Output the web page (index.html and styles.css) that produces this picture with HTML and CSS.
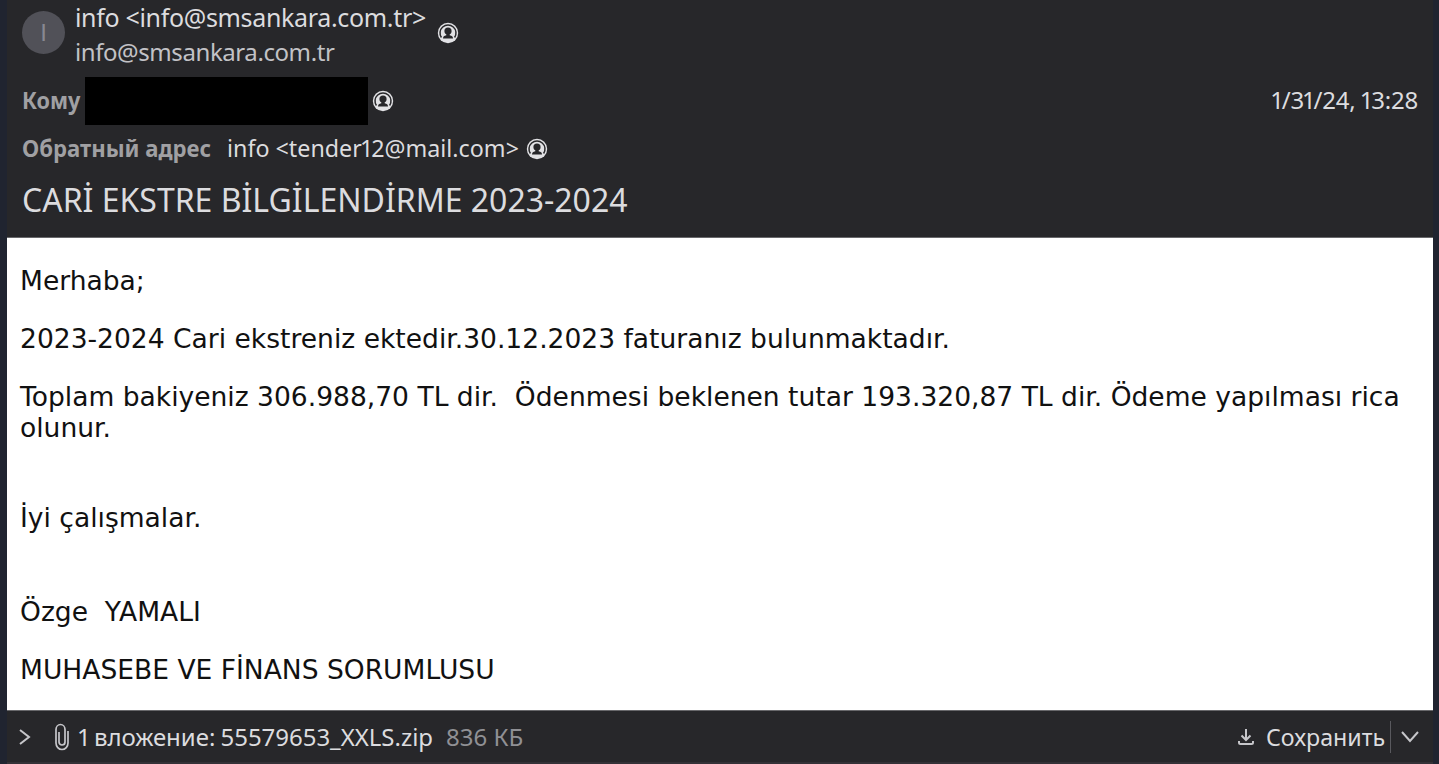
FILE: index.html
```html
<!DOCTYPE html>
<html lang="ru">
<head>
<meta charset="utf-8">
<title>CARİ EKSTRE BİLGİLENDİRME 2023-2024</title>
<link rel="stylesheet" href="styles.css">
</head>
<body>
<svg class="defs" width="0" height="0"><symbol id="contact" viewBox="0 0 22 22"><circle cx="11" cy="11" r="10.200" fill="currentColor"/><path d="M4.400 15.500A8 8 0 1 1 17.600 15.500" fill="none" stroke="#27272a" stroke-width="1.500"/><circle cx="11" cy="9" r="3.600" fill="#27272a"/><path d="M9.300 11h3.400v2.200q3.300.5 3.300 3.300H6q0-2.800 3.300-3.300z" fill="#27272a"/></symbol></svg>
<div class="window">
<header class="header">
<div class="sender"><div class="avatar">I</div><div class="names"><div><span class="t name">info &lt;info@smsankara.com.tr&gt;</span></div><div><span class="t mail">info@smsankara.com.tr</span></div></div><svg class="contact"><use href="#contact"/></svg></div>
<div class="row to"><span class="label t tol">Кому</span><span class="redacted"></span><svg class="contact"><use href="#contact"/></svg><time class="t"><i>1</i>/3<i>1</i>/24, <i>1</i>3:28</time></div>
<div class="row reply"><span class="label t rl">Обратный адрес</span><span class="t ra">info &lt;tender<i>1</i>2@mail.com&gt;</span><svg class="contact"><use href="#contact"/></svg></div>
<h1><span class="t subj">CARİ EKSTRE BİLGİLENDİRME 2023-2024</span></h1>
</header>
<main class="body">
<p>Merhaba;</p>
<p>2023-2024 Cari ekstreniz ektedir.30.12.2023 faturanız bulunmaktadır.</p>
<p>Toplam bakiyeniz 306.988,70 TL dir.&nbsp; Ödenmesi beklenen tutar 193.320,87 TL dir. Ödeme yapılması rica<br>olunur.</p>
<p class="gap1">İyi çalışmalar.</p>
<p class="gap2">Özge&nbsp; YAMALI</p>
<p>MUHASEBE VE FİNANS SORUMLUSU</p>
</main>
<footer class="footer">
<svg class="chev" viewBox="0 0 12 16"><path d="M1 1l9 7-9 7"/></svg>
<svg class="clip" viewBox="0 0 16 28"><path d="M11 7v12a3 3 0 0 1-6 0V9M14 8v12a6 6.500 0 0 1-12 0V6.500a4.500 5 0 0 1 9 0V8"/></svg>
<span class="t att"><i>1</i> вложение: 55579653_XXLS.zip</span><span class="t size">836 КБ</span>
<svg class="down" viewBox="0 0 16 18"><path d="M8 1v11M3.500 7.500L8 12l4.500-4.500M1 13v1.500q0 1.500 1.500 1.500h11q1.500 0 1.500-1.500V13"/></svg>
<span class="t save">Сохранить</span><span class="divider"></span>
<svg class="drop" viewBox="0 0 18 12"><path d="M1 1l8 9 8-9"/></svg>
</footer>
</div>
</body>
</html>
```
FILE: styles.css
```css
*{box-sizing:border-box}
body{margin:0;background:#27272a;color:#dcdcdf;font:24px "Noto Sans",sans-serif}
.defs{position:absolute}
.window{width:1439px;height:764px;display:flex;flex-direction:column;border:solid #202430;border-width:0 6px 0 7px;overflow:hidden}
.t{white-space:pre;display:inline-block;transform-origin:0 50%}
i{font-style:normal;margin:0 -2px}
.header{height:238px;padding-left:15px;flex:none;border-bottom:1px solid #68686b}
.sender{display:flex;height:77px}
.avatar{width:43px;height:43px;margin:11px 10px 0 0;border-radius:50%;background:#515158;color:#888892;text-align:center;font:24px/44px "Liberation Sans",sans-serif}
.names{width:351px;margin-right:11px;line-height:35px}
.name{font-size:25px;letter-spacing:-.33px}
.mail{letter-spacing:-.42px;color:#c2c2c6;position:relative;top:-1px}
.contact{width:22px;height:22px;flex:none;color:#e2e2e5}
.sender .contact{margin-top:22px}
.row{display:flex;align-items:center;height:48px}
.row .t{position:relative;top:-2px}
.label{color:#a0a0a3;font-weight:bold}
.tol{width:59px;transform:scaleX(.9)}
.rl{width:189px;transform:scaleX(.922)}
.redacted{width:283px;height:48px;background:#000;margin:0 4px}
time{margin-left:auto;margin-right:15px;letter-spacing:-.2px}
.ra{width:293px;margin:0 6px 0 16px;transform:scaleX(.97)}
h1{margin:7px 0 0;font-size:32px;font-weight:400;line-height:40px}
.body{height:472px;flex:none;background:#fff;color:#111;padding:27px 13px;font:26.54px/31px "DejaVu Sans",sans-serif;white-space:nowrap}
.body p{margin:0 0 27px}
.body .gap1{margin-top:59px}
.body .gap2{margin-top:63px}
.footer{display:flex;align-items:center;height:54px;border-top:1px solid #68686b;border-bottom:2px solid #343137}
.footer svg{fill:none;stroke:#c6c6ca;stroke-width:2;flex:none}
.chev{width:12px;height:16px;margin:0 23px 0 12px}
.footer .clip{width:16px;height:28px;margin-right:9px;stroke-width:1.700}
.att{word-spacing:-1px;letter-spacing:-.03px}
.size{color:#909094;margin-left:13px}
.down{width:16px;height:18px;margin-left:auto;margin-right:12px}
.save{width:119px;transform:scaleX(.967)}
.divider{width:1px;height:32px;background:#59595e;margin:0 10px 0 5px}
.drop{width:18px;height:12px;margin-right:14px}
```
